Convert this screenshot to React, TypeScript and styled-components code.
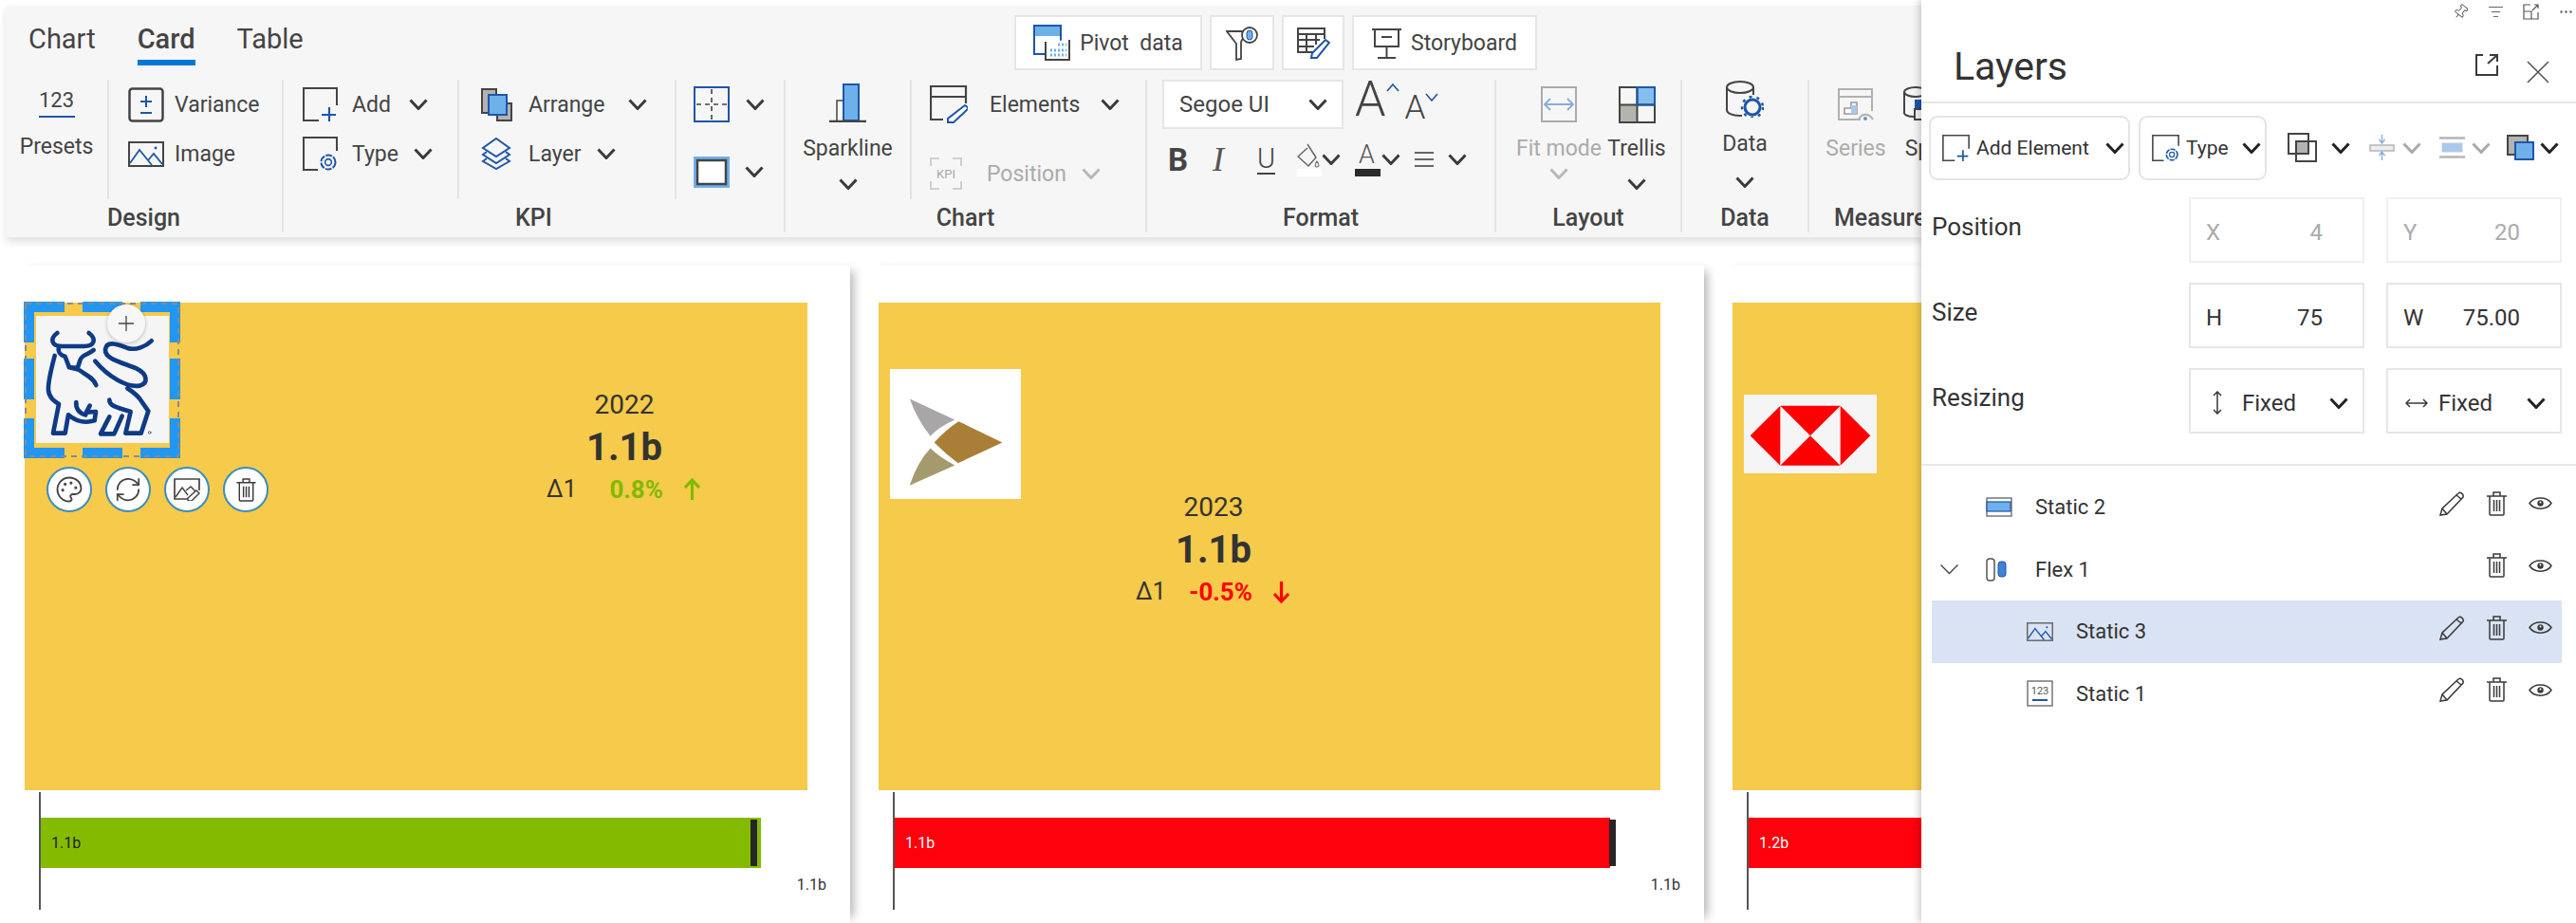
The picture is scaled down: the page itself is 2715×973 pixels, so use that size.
import * as React from "react";
import styled, { createGlobalStyle } from "styled-components";
import { Palette, RefreshCw, Pin, ListFilter, Ellipsis, Plus } from "lucide-react";

const DARK = "#444444";
const BLUE = "#1e56a8";
const SKY = "#6eb0ea";
const STONE = "#b5b3ae";
const MUTED = "#ababab";

const GlobalStyle = createGlobalStyle`
  html, body {
    margin: 0;
    padding: 0;
    background: #ffffff;
  }
  * {
    box-sizing: border-box;
  }
  body {
    font-family: Roboto, "Open Sans", "Liberation Sans", sans-serif;
    color: #3a3a3a;
  }
`;

const Page = styled.div`
  display: flex;
  width: 2715px;
  height: 973px;
  overflow: hidden;
`;

const Main = styled.div`
  width: 2025px;
  flex: none;
  overflow: hidden;
  background: #ffffff;
  display: flex;
  flex-direction: column;
`;

/* ---------- ribbon ---------- */

const Ribbon = styled.div`
  width: 2040px;
  height: 244px;
  margin: 6px 0 0 6px;
  flex: none;
  background: #f6f6f6;
  box-shadow: 0 5px 8px rgba(0, 0, 0, 0.12);
  position: relative;
  z-index: 2;
`;

const TabRow = styled.div`
  display: flex;
  height: 78px;
`;

const Tabs = styled.div`
  width: 1063px;
  padding-left: 24px;
  display: flex;
  gap: 44px;
`;

const Tab = styled.div<{ $active?: boolean }>`
  height: 63px;
  line-height: 70px;
  font-size: 29px;
  font-weight: ${(p) => (p.$active ? 500 : 400)};
  color: #444;
  border-bottom: 6px solid ${(p) => (p.$active ? "#0078d4" : "transparent")};
`;

const TopActions = styled.div`
  display: flex;
  gap: 8px;
  padding-top: 10px;
`;

const TopAction = styled.div<{ $w: number }>`
  width: ${(p) => p.$w}px;
  height: 58px;
  background: #fff;
  border: 2px solid #e6e6e6;
  display: flex;
  align-items: center;
  justify-content: center;
  gap: 10px;
  font-size: 23px;
  color: #444;
`;

const Groups = styled.div`
  display: flex;
  height: 166px;
`;

const Group = styled.div<{ $w: number; $end?: boolean }>`
  width: ${(p) => p.$w}px;
  flex: none;
  height: 161px;
  display: flex;
  flex-direction: column;
  border-right: ${(p) => (p.$end ? "none" : "2px solid #e4e4e4")};
`;

const GroupBody = styled.div`
  display: flex;
  height: 126px;
  flex: none;
`;

const GroupTitle = styled.div<{ $left?: number }>`
  height: 35px;
  line-height: 40px;
  text-align: ${(p) => (p.$left ? "left" : "center")};
  padding-left: ${(p) => p.$left ?? 0}px;
  font-size: 25px;
  font-weight: 500;
  color: #444;
  white-space: nowrap;
`;

const Cell = styled.div<{ $w: number; $line?: boolean; $pl?: number }>`
  width: ${(p) => p.$w}px;
  flex: none;
  padding-left: ${(p) => p.$pl ?? 0}px;
  border-right: ${(p) => (p.$line ? "2px solid #e4e4e4" : "none")};
`;

const ToolRow = styled.div<{ $h?: number; $mt?: number }>`
  display: flex;
  align-items: center;
  height: ${(p) => p.$h ?? 52}px;
  margin-top: ${(p) => p.$mt ?? 0}px;
`;

const ToolLabel = styled.span<{ $w: number; $ml: number; $muted?: boolean }>`
  width: ${(p) => p.$w}px;
  margin-left: ${(p) => p.$ml}px;
  font-size: 23px;
  color: ${(p) => (p.$muted ? MUTED : "#444")};
  white-space: nowrap;
`;

const PresetBlock = styled.div`
  display: flex;
  flex-direction: column;
  align-items: center;
  font-size: 23px;
  color: #444;
`;

const PresetNumber = styled.div`
  margin-top: 11px;
  width: 38px;
  height: 29px;
  line-height: 22px;
  text-align: center;
  font-size: 22px;
  border-bottom: 2px solid ${BLUE};
`;

const PresetName = styled.div`
  margin-top: 16px;
  line-height: 30px;
`;

const VerticalTool = styled.div<{ $w: number; $ml?: number; $muted?: boolean }>`
  width: ${(p) => p.$w}px;
  margin-left: ${(p) => p.$ml ?? 0}px;
  flex: none;
  display: flex;
  flex-direction: column;
  align-items: center;
  font-size: 23px;
  color: ${(p) => (p.$muted ? MUTED : "#444")};
`;

const IconSlot = styled.div<{ $h: number; $top: number }>`
  height: ${(p) => p.$h}px;
  padding-top: ${(p) => p.$top}px;
`;

const VerticalLabel = styled.div<{ $mb: number }>`
  line-height: 36px;
  margin-bottom: ${(p) => p.$mb}px;
  white-space: nowrap;
`;

const FontSelect = styled.div`
  width: 191px;
  height: 52px;
  margin-left: 16px;
  background: #fff;
  border: 2px solid #e6e6e6;
  display: flex;
  align-items: center;
  justify-content: space-between;
  padding: 0 15px 0 16px;
  font-size: 24px;
  color: #444;
`;

const GrowLetter = styled.span<{ $size: number; $ml: number }>`
  margin: 0 0 5px ${(p) => p.$ml}px;
  font-size: ${(p) => p.$size}px;
  font-weight: 300;
  line-height: 1;
  color: #444;
  align-self: flex-end;
`;

const FormatRow = styled.div`
  display: flex;
  align-items: center;
  height: 52px;
  margin-top: 6px;
  padding-left: 22px;
`;

const FormatSlot = styled.div<{ $w: number }>`
  width: ${(p) => p.$w}px;
  flex: none;
  display: flex;
  flex-direction: column;
  align-items: flex-start;
`;

const BoldMark = styled.span`
  font-size: 33px;
  font-weight: 700;
  color: #444;
  line-height: 1;
`;

const ItalicMark = styled.span`
  font-family: "Liberation Serif", serif;
  font-style: italic;
  font-size: 36px;
  color: #555;
  line-height: 1;
`;

const UnderMark = styled.span`
  font-size: 29px;
  font-weight: 300;
  line-height: 30px;
  color: #444;
  border-bottom: 2px solid #444;
`;

const ColorLetter = styled.span`
  font-size: 27px;
  font-weight: 300;
  line-height: 24px;
  color: #555;
  margin-left: 4px;
`;

const ColorBar = styled.span`
  display: block;
  width: 27px;
  height: 8px;
  margin-top: 3px;
  background: #2b2b2b;
`;

/* ---------- cards ---------- */

const CardsRow = styled.div`
  display: flex;
  gap: 18px;
  padding: 30px 0 0 14px;
  flex: 1;
`;

const Card = styled.div`
  width: 882px;
  flex: none;
  padding-top: 39px;
  box-shadow: 9px 0 10px -6px rgba(0, 0, 0, 0.32);
`;

const YellowPanel = styled.div<{ $w: number }>`
  position: relative;
  width: ${(p) => p.$w}px;
  height: 514px;
  margin-left: 12px;
  background: #f6ca4a;
  display: flex;
  align-items: flex-start;
`;

const LogoBox = styled.div<{ $w: number; $h: number; $ml: number; $mt: number; $bg: string }>`
  width: ${(p) => p.$w}px;
  height: ${(p) => p.$h}px;
  margin: ${(p) => p.$mt}px 0 0 ${(p) => p.$ml}px;
  background: ${(p) => p.$bg};
  flex: none;
  svg {
    display: block;
    width: 100%;
    height: 100%;
  }
`;

const Kpi = styled.div<{ $ml: number; $mt: number }>`
  width: 164px;
  margin: ${(p) => p.$mt}px 0 0 ${(p) => p.$ml}px;
  flex: none;
  text-align: center;
  color: #333;
`;

const KpiYear = styled.div`
  font-size: 28px;
  line-height: 40px;
`;

const KpiValue = styled.div`
  font-size: 40px;
  line-height: 50px;
  font-weight: 700;
`;

const KpiDelta = styled.div`
  display: flex;
  align-items: center;
  font-size: 25px;
  line-height: 38px;
`;

const DeltaName = styled.span`
  width: 34px;
  text-align: left;
`;

const DeltaValue = styled.span<{ $color: string }>`
  width: 89px;
  margin-right: 21px;
  text-align: right;
  font-size: 26px;
  font-weight: 700;
  color: ${(p) => p.$color};
`;

const SelectionFrame = styled.svg`
  position: absolute;
  left: -1px;
  top: -1px;
`;

const AddCircle = styled.div`
  position: absolute;
  left: 87px;
  top: 2px;
  width: 40px;
  height: 40px;
  border-radius: 50%;
  background: #f7f7f7;
  box-shadow: 0 1px 4px rgba(0, 0, 0, 0.25);
  display: flex;
  align-items: center;
  justify-content: center;
  color: #444;
`;

const FloatingTools = styled.div`
  position: absolute;
  left: 23px;
  top: 173px;
  display: flex;
  gap: 14px;
`;

const RoundTool = styled.div`
  width: 48px;
  height: 48px;
  border-radius: 50%;
  background: #fff;
  border: 2px solid #3d8dbf;
  display: flex;
  align-items: center;
  justify-content: center;
  color: #444;
`;

const ChartArea = styled.div`
  width: 830px;
  height: 124px;
  margin: 2px 0 0 27px;
  border-left: 2px solid #555;
  padding-top: 27px;
`;

const Bar = styled.div<{ $w: number; $color: string; $text: string }>`
  position: relative;
  width: ${(p) => p.$w}px;
  height: 53px;
  background: ${(p) => p.$color};
  color: ${(p) => p.$text};
  font-size: 16px;
  line-height: 53px;
  padding-left: 11px;
`;

const BarMarker = styled.span<{ $right: number }>`
  position: absolute;
  top: 2px;
  bottom: 2px;
  right: ${(p) => p.$right}px;
  width: 7px;
  background: #262626;
`;

const AxisLabel = styled.div`
  margin-top: 6px;
  text-align: right;
  font-size: 16px;
  line-height: 24px;
  color: #333;
`;

/* ---------- layers panel ---------- */

const Panel = styled.aside`
  width: 690px;
  flex: none;
  position: relative;
  z-index: 3;
  background: #fff;
  box-shadow: -3px 0 7px rgba(0, 0, 0, 0.18);
`;

const WindowIcons = styled.div`
  display: flex;
  height: 28px;
  padding: 4px 0 0 560px;
  color: #555;
  gap: 20px;
`;

const PanelHeader = styled.div`
  height: 81px;
  display: flex;
  align-items: center;
  padding: 4px 0 0 34px;
  border-bottom: 2px solid #e6e6e6;
`;

const PanelTitle = styled.h1`
  margin: 0 auto 0 0;
  font-size: 41px;
  font-weight: 400;
  color: #333;
`;

const HeaderIcons = styled.div`
  align-self: flex-start;
  display: flex;
  align-items: flex-start;
  gap: 30px;
  padding: 25px 28px 0 0;
`;

const CloseMark = styled.svg`
  display: block;
  margin-top: 7px;
`;

const PanelToolbar = styled.div`
  display: flex;
  align-items: center;
  height: 81px;
  padding: 12px 0 0 8px;
`;

const PanelButton = styled.div<{ $w: number; $mr: number }>`
  width: ${(p) => p.$w}px;
  height: 68px;
  margin-right: ${(p) => p.$mr}px;
  border: 2px solid #e4e4e4;
  border-radius: 9px;
  display: flex;
  align-items: center;
  padding-left: 12px;
  font-size: 21px;
  color: #333;
`;

const ButtonText = styled.span<{ $w: number }>`
  width: ${(p) => p.$w}px;
  margin-left: 7px;
  white-space: nowrap;
`;

const ToolSlot = styled.div<{ $w: number; $gap: number }>`
  width: ${(p) => p.$w}px;
  flex: none;
  display: flex;
  align-items: center;
  gap: ${(p) => p.$gap}px;
`;

const Properties = styled.div`
  display: flex;
  flex-direction: column;
  gap: 21px;
  padding: 18px 0 32px 11px;
  border-bottom: 2px solid #e6e6e6;
`;

const PropRow = styled.div`
  display: flex;
  gap: 23px;
  height: 69px;
`;

const PropLabel = styled.div`
  width: 248px;
  line-height: 63px;
  font-size: 26px;
  color: #333;
`;

const Field = styled.div<{ $muted?: boolean }>`
  width: 185px;
  border: 2px solid ${(p) => (p.$muted ? "#f0f0f0" : "#e6e6e6")};
  display: flex;
  align-items: center;
  justify-content: space-between;
  padding: 4px 42px 0 16px;
  font-size: 24px;
  color: ${(p) => (p.$muted ? MUTED : "#333")};
`;

const SelectField = styled(Field)`
  justify-content: flex-start;
  padding: 4px 0 0 0;
`;

const FixedText = styled.span<{ $w: number; $ml: number }>`
  width: ${(p) => p.$w}px;
  margin-left: ${(p) => p.$ml}px;
`;

const LayerList = styled.div`
  padding: 11px 15px 0 11px;
`;

const LayerRow = styled.div<{ $selected?: boolean }>`
  display: flex;
  align-items: center;
  height: 65.5px;
  padding-right: 10px;
  background: ${(p) => (p.$selected ? "#dae3f3" : "transparent")};
  font-size: 22px;
  color: #333;
`;

const Caret = styled.div`
  width: 57px;
  flex: none;
  padding-left: 8px;
`;

const LayerIconBox = styled.div<{ $indent: boolean }>`
  width: 52px;
  flex: none;
  margin-left: ${(p) => (p.$indent ? 43 : 0)}px;
`;

const LayerName = styled.span`
  margin-right: auto;
`;

const LayerActions = styled.div`
  display: flex;
  align-items: center;
  gap: 23px;
  margin-top: -8px;
`;

/* ---------- icons ---------- */

const Chevron = ({ w = 20, h = 12, color = "#3a3a3a", sw = 3 }: { w?: number; h?: number; color?: string; sw?: number }) => (
  <svg width={w} height={h} viewBox={`0 0 ${w} ${h}`} style={{ display: "block", flex: "none" }}>
    <path d={`M1.5 1.5 L${w / 2} ${h - 1.5} L${w - 1.5} 1.5`} fill="none" stroke={color} strokeWidth={sw} />
  </svg>
);

const Ico = styled.svg`
  display: block;
  flex: none;
`;

const VarianceIcon = () => (
  <Ico width="38" height="37" viewBox="0 0 38 37" fill="none">
    <rect x="1.5" y="1.5" width="35" height="34" rx="3" stroke={DARK} strokeWidth="2.5" />
    <path d="M13 15h12M19 9v12M13 27h12" stroke={BLUE} strokeWidth="2" />
  </Ico>
);

const ImageIcon = ({ w = 38, h = 27, color = DARK }: { w?: number; h?: number; color?: string }) => (
  <Ico width={w} height={h} viewBox="0 0 38 27" fill="none">
    <rect x="1" y="1" width="36" height="25" stroke={color} strokeWidth="2" />
    <path d="M2 23 L12 9 L25 25 M21 20 L27 13 L36 24" stroke={BLUE} strokeWidth="1.8" />
    <circle cx="29" cy="7" r="1.4" fill={BLUE} />
  </Ico>
);

const AddIcon = ({ w = 37, h = 36 }: { w?: number; h?: number }) => (
  <Ico width={w} height={h} viewBox="0 0 37 36" fill="none">
    <path d="M17 35H1V1H36V19" stroke={DARK} strokeWidth="2" />
    <path d="M20 29H35M28 21V36" stroke={BLUE} strokeWidth="2.2" />
  </Ico>
);

const Gear = ({ x, y, r }: { x: number; y: number; r: number }) => (
  <g stroke={BLUE} fill="none">
    <circle cx={x} cy={y} r={r} strokeWidth="2" strokeDasharray={`${r * 0.9} ${r * 0.18}`} />
    <circle cx={x} cy={y} r={r * 0.45} strokeWidth="1.6" />
  </g>
);

const TypeIcon = ({ w = 37, h = 36 }: { w?: number; h?: number }) => (
  <Ico width={w} height={h} viewBox="0 0 37 36" fill="none">
    <path d="M16 35H1V1H36V15" stroke={DARK} strokeWidth="2" />
    <Gear x={27} y={27} r={7.5} />
  </Ico>
);

const ArrangeIcon = () => (
  <Ico width="34" height="35" viewBox="0 0 34 35">
    <rect x="1" y="1" width="15" height="25" fill={STONE} stroke={DARK} strokeWidth="2" />
    <rect x="17" y="16" width="15" height="18" fill={STONE} stroke={DARK} strokeWidth="2" />
    <rect x="8" y="7" width="19" height="21" fill={SKY} stroke={BLUE} strokeWidth="2" />
  </Ico>
);

const LayerIcon = () => (
  <Ico width="32" height="34" viewBox="0 0 32 34" fill="none" stroke={BLUE} strokeWidth="2">
    <path d="M16 1 L30 11 L16 20 L2 11Z" />
    <path d="M6 15 L2 18 L16 27 L30 18 L26 15" />
    <path d="M6 22 L2 25 L16 33 L30 25 L26 22" />
  </Ico>
);

const GuideIcon = () => (
  <Ico width="38" height="38" viewBox="0 0 38 38" fill="none">
    <rect x="1" y="1" width="36" height="36" stroke={BLUE} strokeWidth="2" />
    <path d="M19 3V35M3 19H35" stroke={DARK} strokeWidth="1.6" strokeDasharray="5 4" />
  </Ico>
);

const BoxIcon = () => (
  <Ico width="38" height="33" viewBox="0 0 38 33">
    <rect width="38" height="33" fill={SKY} />
    <rect x="4" y="4" width="30" height="25" fill="#fff" stroke={DARK} strokeWidth="2.5" />
  </Ico>
);

const SparklineIcon = () => (
  <Ico width="39" height="41" viewBox="0 0 39 41">
    <rect x="8" y="18" width="10" height="22" fill="none" stroke={DARK} strokeWidth="1.5" />
    <rect x="15" y="1" width="16" height="38" fill={SKY} stroke={BLUE} strokeWidth="2" />
    <path d="M0 40H39" stroke={DARK} strokeWidth="2.5" />
  </Ico>
);

const ElementsIcon = () => (
  <Ico width="40" height="40" viewBox="0 0 40 40" fill="none">
    <path d="M14 36H1V1H38V19M1 12H38" stroke={DARK} strokeWidth="2.2" />
    <path d="M37 21 L41 24 L25 39 L19 39 L19 35Z" fill="#fff" stroke={BLUE} strokeWidth="2" />
  </Ico>
);

const KpiFrameIcon = () => (
  <Ico width="34" height="34" viewBox="0 0 34 34" fill="none">
    <path d="M1 9V1H10M24 1H33V9M33 25V33H24M10 33H1V25" stroke="#cfcfcf" strokeWidth="2" />
    <text x="17" y="22" textAnchor="middle" fontSize="13" fill="#a8a8a8" fontFamily="Roboto, sans-serif">KPI</text>
  </Ico>
);

const PivotIcon = () => (
  <Ico width="39" height="38" viewBox="0 0 39 38" fill="none">
    <rect x="1" y="1" width="28" height="30" fill="#fff" stroke={BLUE} strokeWidth="2" />
    <rect x="2" y="2" width="26" height="10" fill={SKY} />
    <path d="M13 18V37H38V16" fill="#fff" stroke={DARK} strokeWidth="2" />
    <path d="M18 32H35M18 27H35M26 21H35" stroke={SKY} strokeWidth="3" strokeDasharray="2 2" />
  </Ico>
);

const FunnelIcon = () => (
  <Ico width="34" height="37" viewBox="0 0 34 37" fill="none">
    <path d="M1 6H22L16 17V35L11 36V19Z" stroke={DARK} strokeWidth="1.8" />
    <circle cx="25" cy="10" r="8" fill="#fff" stroke={DARK} strokeWidth="1.8" />
    <rect x="22" y="5" width="6" height="10" rx="3" fill={SKY} stroke={BLUE} strokeWidth="1" />
  </Ico>
);

const TableEditIcon = () => (
  <Ico width="35" height="33" viewBox="0 0 35 33" fill="none">
    <path d="M19 26H1V1H29V12M1 7H29M1 13H24M1 20H18M10 7V26M20 7V18" stroke={DARK} strokeWidth="2" />
    <path d="M30 13 L34 16 L21 32 L15 32 L16 27Z" fill="#fff" stroke={BLUE} strokeWidth="2" />
  </Ico>
);

const StoryIcon = () => (
  <Ico width="31" height="33" viewBox="0 0 31 33" fill="none" stroke={DARK} strokeWidth="2">
    <path d="M0 2H31M3 2V20H28V2M15.5 20V31M6 32H25M10 10H21" />
  </Ico>
);

const FitIcon = () => (
  <Ico width="38" height="38" viewBox="0 0 38 38" fill="none">
    <rect x="1" y="1" width="36" height="36" stroke="#ababab" strokeWidth="2" />
    <path d="M4 19H34M10 13 L4 19 L10 25M28 13 L34 19 L28 25" stroke="#86acd9" strokeWidth="1.8" />
  </Ico>
);

const TrellisIcon = () => (
  <Ico width="39" height="39" viewBox="0 0 39 39">
    <rect x="1" y="20" width="18" height="18" fill={STONE} />
    <rect x="20" y="1" width="18" height="18" fill="#85bdee" />
    <path d="M1 1H38V38H1ZM19.5 1V38M1 19.5H38" fill="none" stroke={DARK} strokeWidth="2" />
    <path d="M19.5 1H38V19.5H19.5Z" fill="none" stroke={BLUE} strokeWidth="2" />
  </Ico>
);

const DataIcon = () => (
  <Ico width="40" height="39" viewBox="0 0 40 39" fill="none">
    <ellipse cx="15" cy="7" rx="14" ry="6" stroke={DARK} strokeWidth="2" />
    <path d="M1 7V31C1 34 6 37 15 37H17M29 7V15" stroke={DARK} strokeWidth="2" />
    <circle cx="28" cy="28" r="8" stroke={BLUE} strokeWidth="3" />
    <circle cx="28" cy="28" r="11" stroke={BLUE} strokeWidth="2.5" strokeDasharray="3 5" />
  </Ico>
);

const SeriesIcon = () => (
  <Ico width="38" height="36" viewBox="0 0 38 36" fill="none">
    <path d="M24 33H1V1H36V24M1 9H36" stroke="#b0b0b0" strokeWidth="2" />
    <path d="M7 27V21H14V15H20V27Z" fill="#fff" stroke="#9a9a9a" strokeWidth="1.6" />
    <rect x="14" y="18" width="6" height="9" fill="#a9c8ec" />
    <path d="M22 33C25 26 33 26 37 33" stroke="#b0b0b0" strokeWidth="2" />
    <circle cx="29" cy="32" r="2" fill="#6a92c5" />
  </Ico>
);

const SplitIcon = () => (
  <Ico width="30" height="36" viewBox="0 0 30 36" fill="none">
    <ellipse cx="13" cy="6" rx="12" ry="5" stroke={DARK} strokeWidth="2" />
    <path d="M1 6V28C1 30 5 32 11 32M25 6V12" stroke={DARK} strokeWidth="2" />
    <rect x="12" y="14" width="18" height="10" fill={BLUE} />
    <rect x="12" y="24" width="18" height="11" stroke={DARK} strokeWidth="2" />
  </Ico>
);

const FillIcon = () => (
  <Ico width="26" height="36" viewBox="0 0 26 36" fill="none">
    <path d="M11 2 L20 16 L12 25 L1 15 L11 6" stroke="#666" strokeWidth="1.5" />
    <path d="M21 20 C18 24 19 26 21 26 C23 26 24 24 21 20Z" stroke="#666" strokeWidth="1.2" />
    <rect y="28" width="26" height="8" fill="#fff" />
  </Ico>
);

const LinesIcon = () => (
  <Ico width="23" height="16" viewBox="0 0 23 16" fill="none">
    <path d="M1 1H21M1 8H21M1 15H21" stroke="#666" strokeWidth="2" />
  </Ico>
);

const GrowCaret = ({ down }: { down?: boolean }) => (
  <svg width="14" height="9" viewBox="0 0 14 9" fill="none" style={{ alignSelf: "flex-start", marginTop: down ? 14 : 4 }}>
    <path d={down ? "M1 1 L7 8 L13 1" : "M1 8 L7 1 L13 8"} stroke={BLUE} strokeWidth="1.6" />
  </svg>
);

const OpenIcon = () => (
  <Ico width="24" height="23" viewBox="0 0 24 23" fill="none" stroke="#3a3a3a" strokeWidth="2">
    <path d="M8 1H1V22H23V12M13 10 L23 1M15 1H23V8" />
  </Ico>
);

const ExpandIcon = () => (
  <Ico width="17" height="17" viewBox="0 0 17 17" fill="none" stroke="#555" strokeWidth="1.2">
    <path d="M8 1H1V16H16V9M1 8H9V16M10 7 L16 1M12 1H16V5" />
  </Ico>
);

const OverlapIcon = () => (
  <Ico width="31" height="31" viewBox="0 0 31 31" fill="none">
    <rect x="9" y="9" width="12" height="13" fill={STONE} />
    <rect x="1" y="1" width="21" height="21" stroke={DARK} strokeWidth="2" />
    <rect x="9" y="9" width="21" height="21" stroke={DARK} strokeWidth="2" />
  </Ico>
);

const AlignIcon = () => (
  <Ico width="27" height="27" viewBox="0 0 27 27" fill="none">
    <rect x="1" y="11" width="25" height="6" fill="#eee" stroke="#b5b5b5" strokeWidth="1.5" />
    <path d="M13.5 0V8M10.5 5 L13.5 9 L16.5 5M13.5 27V19M10.5 22 L13.5 18 L16.5 22" stroke="#86acd9" strokeWidth="1.3" />
  </Ico>
);

const DistributeIcon = () => (
  <Ico width="27" height="23" viewBox="0 0 27 23" fill="none">
    <path d="M0 1.5H27M0 21.5H27" stroke="#b5b5b5" strokeWidth="2.4" />
    <rect x="3" y="7" width="21" height="9" fill="#a9c8ec" stroke="#b9cde6" />
  </Ico>
);

const FrontIcon = () => (
  <Ico width="29" height="27" viewBox="0 0 29 27">
    <rect x="1" y="1" width="21" height="20" fill={STONE} stroke={DARK} strokeWidth="2" />
    <rect x="9" y="8" width="19" height="18" fill={SKY} stroke={BLUE} strokeWidth="2" />
  </Ico>
);

const VerticalArrow = () => (
  <Ico width="10" height="25" viewBox="0 0 10 25" fill="none" stroke="#3a3a3a" strokeWidth="1.5">
    <path d="M5 1V24M1 5 L5 1 L9 5M1 20 L5 24 L9 20" />
  </Ico>
);

const HorizontalArrow = () => (
  <Ico width="24" height="10" viewBox="0 0 24 10" fill="none" stroke="#3a3a3a" strokeWidth="1.5">
    <path d="M1 5H23M5 1 L1 5 L5 9M19 1 L23 5 L19 9" />
  </Ico>
);

const PencilIcon = () => (
  <Ico width="27" height="26" viewBox="0 0 27 26" fill="none" stroke="#3a3a3a" strokeWidth="1.5">
    <path d="M20 2 C22 0 26 3 25 6 L8 24 L1 25 L3 18Z M3 18 L8 24 M18 4 L23 8" />
  </Ico>
);

const TrashIcon = ({ w = 21, h = 26 }: { w?: number; h?: number }) => (
  <Ico width={w} height={h} viewBox="0 0 21 26" fill="none" stroke="#3a3a3a" strokeWidth="1.5">
    <path d="M0 5H21M7 5V1H14V5M3 5V24C3 25 4 25 4 25H17C17 25 18 25 18 24V5M7.5 9V21M10.5 9V21M13.5 9V21" />
  </Ico>
);

const EyeIcon = () => (
  <Ico width="25" height="13" viewBox="0 0 25 13" fill="none" stroke="#3a3a3a" strokeWidth="1.5">
    <path d="M1 6.5 C6 -1 19 -1 24 6.5 C19 14 6 14 1 6.5Z" />
    <circle cx="12.5" cy="6.5" r="3.2" fill="#3a3a3a" stroke="none" />
    <circle cx="12.5" cy="5.5" r="1" fill="#fff" stroke="none" />
  </Ico>
);

const ImageEditIcon = () => (
  <Ico width="28" height="24" viewBox="0 0 28 24" fill="none">
    <path d="M15 22H1V1H27V13" stroke={DARK} strokeWidth="1.7" />
    <path d="M2 20 L9 10 L15 18M13 13 L18 9 L23 14" stroke={DARK} strokeWidth="1.5" />
    <path d="M24 13 L27 16 L19 24 L15 24 L15 21Z" fill="#fff" stroke={DARK} strokeWidth="1.5" />
  </Ico>
);

const StaticCardIcon = () => (
  <Ico width="28" height="21" viewBox="0 0 28 21">
    <rect x="1" y="1" width="26" height="19" fill="#fff" stroke="#777" strokeWidth="1.5" />
    <rect x="1" y="5" width="25" height="10" fill={SKY} stroke={BLUE} strokeWidth="1.2" />
  </Ico>
);

const FlexIcon = () => (
  <Ico width="22" height="25" viewBox="0 0 22 25" fill="none">
    <rect x="1" y="1" width="8" height="23" rx="3" stroke="#555" strokeWidth="1.5" />
    <rect x="13" y="4" width="8" height="16" rx="3" fill="#3f83d6" stroke={BLUE} />
  </Ico>
);

const NumberIcon = () => (
  <Ico width="28" height="28" viewBox="0 0 28 28" fill="none">
    <rect x="1" y="1" width="26" height="26" stroke="#777" strokeWidth="1.5" />
    <text x="14" y="15" textAnchor="middle" fontSize="11" fill="#555" fontFamily="Roboto, sans-serif">123</text>
    <path d="M6 21H22" stroke={BLUE} strokeWidth="2" />
  </Ico>
);

const ArrowMark = ({ color, down }: { color: string; down?: boolean }) => (
  <svg width="19" height="24" viewBox="0 0 19 24" fill="none" stroke={color} strokeWidth="3.2" style={{ display: "block" }}>
    <path d={down ? "M9.5 1V22M2 14 L9.5 22 L17 14" : "M9.5 23V2M2 10 L9.5 2 L17 10"} />
  </svg>
);

const BullLogo = () => (
  <svg viewBox="113 100 420 400" fill="none" stroke="#0e3a86" strokeWidth="14" strokeLinejoin="round" strokeLinecap="round">
    <path d="M180 153 C155 172 162 195 195 195 L265 195 C298 195 305 172 280 153" />
    <path d="M185 198 C180 215 190 222 205 228 L218 262 L243 268 L252 240 C256 222 278 222 295 207" />
    <path d="M212 258 L248 258" strokeWidth="5" />
    <path d="M172 225 C160 270 150 310 152 335 C155 358 170 368 185 378 L167 470 L205 470 L215 412 C235 430 265 440 298 430 L302 402 L272 404 L283 383" />
    <path d="M252 272 C270 285 295 295 303 318" />
    <path d="M300 242 C340 290 400 326 440 320 C470 312 465 282 430 265 C380 245 330 235 332 205 C336 175 375 190 400 200 C430 210 460 195 478 178" />
    <path d="M400 202 C425 205 445 200 470 182 C460 200 430 214 400 202Z" fill="#0e3a86" strokeWidth="3" />
    <path d="M345 365 C345 385 370 388 412 402 L396 470 L445 470 L468 400 L440 360 C428 345 412 335 402 328" />
    <path d="M345 418 L317 472 L360 472 L385 416" />
    <path d="M240 372 C238 390 248 408 270 412" />
    <circle cx="472" cy="468" r="4" strokeWidth="2" />
  </svg>
);

const ArrowLogo = () => (
  <svg viewBox="1007 28 350 410">
    <path d="M1038 122 Q1060 185 1103 240 Q1130 210 1180 188Z" fill="#a8a6a6" />
    <path d="M1115 260 Q1150 220 1192 193 L1330 260 L1190 325 Q1150 295 1115 260Z" fill="#a97f38" />
    <path d="M1103 278 Q1130 305 1180 332 L1038 395 Q1060 325 1103 278Z" fill="#a49a6e" />
  </svg>
);

const HexLogo = () => (
  <svg viewBox="110 108 420 249" fill="#ff0000">
    <path d="M130 238 L225 143 V332Z" />
    <path d="M225 143 H415 L320 238Z" />
    <path d="M225 332 H415 L320 238Z" />
    <path d="M415 143 L510 238 L415 332Z" />
  </svg>
);

const Selection = () => (
  <>
    <SelectionFrame width="166" height="166" viewBox="0 0 166 166">
      <g fill="#2196f3">
        <path d="M0 0H43V11H11V43H0Z" />
        <path d="M62 0H104V11H62Z" />
        <path d="M123 0H165V43H154V11H123Z" />
        <path d="M0 60H11V103H0Z" />
        <path d="M154 60H165V103H154Z" />
        <path d="M0 123H11V154H43V165H0Z" />
        <path d="M62 154H104V165H62Z" />
        <path d="M154 123H165V165H123V154H154Z" />
      </g>
      <rect x="2" y="2" width="161" height="161" fill="none" stroke="#8a8a8a" strokeWidth="2" strokeDasharray="6 5" />
    </SelectionFrame>
    <AddCircle>
      <Plus size={26} strokeWidth={1.2} />
    </AddCircle>
    <FloatingTools>
      <RoundTool><Palette size={30} strokeWidth={1.5} /></RoundTool>
      <RoundTool><RefreshCw size={30} strokeWidth={1.4} /></RoundTool>
      <RoundTool><ImageEditIcon /></RoundTool>
      <RoundTool><TrashIcon w={21} h={25} /></RoundTool>
    </FloatingTools>
  </>
);

/* ---------- data ---------- */

const layers = [
  { name: "Static 2", icon: <StaticCardIcon />, indent: false, edit: true },
  { name: "Flex 1", icon: <FlexIcon />, indent: false, edit: false, open: true },
  { name: "Static 3", icon: <ImageIcon w={28} h={26} color="#666" />, indent: true, edit: true, selected: true },
  { name: "Static 1", icon: <NumberIcon />, indent: true, edit: true },
];

const RibbonBar = () => (
  <Ribbon>
    <TabRow>
      <Tabs>
        <Tab>Chart</Tab>
        <Tab $active>Card</Tab>
        <Tab>Table</Tab>
      </Tabs>
      <TopActions>
        <TopAction $w={198}><PivotIcon />Pivot&nbsp; data</TopAction>
        <TopAction $w={68}><FunnelIcon /></TopAction>
        <TopAction $w={66}><TableEditIcon /></TopAction>
        <TopAction $w={195}><StoryIcon />Storyboard</TopAction>
      </TopActions>
    </TabRow>
    <Groups>
      <Group $w={293}>
        <GroupBody>
          <Cell $w={109} $line>
            <PresetBlock>
              <PresetNumber>123</PresetNumber>
              <PresetName>Presets</PresetName>
            </PresetBlock>
          </Cell>
          <Cell $w={182} $pl={20}>
            <ToolRow><VarianceIcon /><ToolLabel $w={100} $ml={11}>Variance</ToolLabel></ToolRow>
            <ToolRow><ImageIcon /><ToolLabel $w={100} $ml={11}>Image</ToolLabel></ToolRow>
          </Cell>
        </GroupBody>
        <GroupTitle>Design</GroupTitle>
      </Group>
      <Group $w={529}>
        <GroupBody>
          <Cell $w={185} $line $pl={20}>
            <ToolRow><AddIcon /><ToolLabel $w={60} $ml={15}>Add</ToolLabel><Chevron /></ToolRow>
            <ToolRow><TypeIcon /><ToolLabel $w={65} $ml={15}>Type</ToolLabel><Chevron /></ToolRow>
          </Cell>
          <Cell $w={229} $line $pl={23}>
            <ToolRow><ArrangeIcon /><ToolLabel $w={105} $ml={16}>Arrange</ToolLabel><Chevron /></ToolRow>
            <ToolRow><LayerIcon /><ToolLabel $w={72} $ml={18}>Layer</ToolLabel><Chevron /></ToolRow>
          </Cell>
          <Cell $w={113} $pl={18}>
            <ToolRow><GuideIcon /><ToolLabel $w={0} $ml={17} /><Chevron /></ToolRow>
            <ToolRow $h={38} $mt={26}><BoxIcon /><ToolLabel $w={0} $ml={16} /><Chevron /></ToolRow>
          </Cell>
        </GroupBody>
        <GroupTitle>KPI</GroupTitle>
      </Group>
      <Group $w={381}>
        <GroupBody>
          <Cell $w={133} $line>
            <VerticalTool $w={131}>
              <IconSlot $h={55} $top={4}><SparklineIcon /></IconSlot>
              <VerticalLabel $mb={13}>Sparkline</VerticalLabel>
              <Chevron />
            </VerticalTool>
          </Cell>
          <Cell $w={246} $pl={19}>
            <ToolRow><ElementsIcon /><ToolLabel $w={117} $ml={23}>Elements</ToolLabel><Chevron /></ToolRow>
            <ToolRow $h={52} $mt={21}>
              <KpiFrameIcon />
              <ToolLabel $w={100} $ml={26} $muted>Position</ToolLabel>
              <Chevron color="#b8b8b8" />
            </ToolRow>
          </Cell>
        </GroupBody>
        <GroupTitle>Chart</GroupTitle>
      </Group>
      <Group $w={368}>
        <GroupBody>
          <Cell $w={366}>
            <ToolRow>
              <FontSelect>Segoe UI<Chevron /></FontSelect>
              <GrowLetter $size={52} $ml={12}>A</GrowLetter>
              <GrowCaret />
              <GrowLetter $size={35} $ml={6}>A</GrowLetter>
              <GrowCaret down />
            </ToolRow>
            <FormatRow>
              <FormatSlot $w={47}><BoldMark>B</BoldMark></FormatSlot>
              <FormatSlot $w={47}><ItalicMark>I</ItalicMark></FormatSlot>
              <FormatSlot $w={42}><UnderMark>U</UnderMark></FormatSlot>
              <FormatSlot $w={26}><FillIcon /></FormatSlot>
              <FormatSlot $w={35}><Chevron /></FormatSlot>
              <FormatSlot $w={28}><ColorLetter>A</ColorLetter><ColorBar /></FormatSlot>
              <FormatSlot $w={34}><Chevron /></FormatSlot>
              <FormatSlot $w={36}><LinesIcon /></FormatSlot>
              <FormatSlot $w={20}><Chevron /></FormatSlot>
            </FormatRow>
          </Cell>
        </GroupBody>
        <GroupTitle>Format</GroupTitle>
      </Group>
      <Group $w={196}>
        <GroupBody>
          <VerticalTool $w={104} $ml={14} $muted>
            <IconSlot $h={55} $top={7}><FitIcon /></IconSlot>
            <VerticalLabel $mb={2}>Fit mode</VerticalLabel>
            <Chevron color="#b8b8b8" />
          </VerticalTool>
          <VerticalTool $w={60}>
            <IconSlot $h={55} $top={7}><TrellisIcon /></IconSlot>
            <VerticalLabel $mb={13}>Trellis</VerticalLabel>
            <Chevron />
          </VerticalTool>
        </GroupBody>
        <GroupTitle>Layout</GroupTitle>
      </Group>
      <Group $w={134}>
        <GroupBody>
          <VerticalTool $w={132}>
            <IconSlot $h={50} $top={1}><DataIcon /></IconSlot>
            <VerticalLabel $mb={16}>Data</VerticalLabel>
            <Chevron />
          </VerticalTool>
        </GroupBody>
        <GroupTitle>Data</GroupTitle>
      </Group>
      <Group $w={200} $end>
        <GroupBody>
          <VerticalTool $w={78} $ml={10} $muted>
            <IconSlot $h={55} $top={9}><SeriesIcon /></IconSlot>
            <VerticalLabel $mb={0}>Series</VerticalLabel>
          </VerticalTool>
          <VerticalTool $w={36} $ml={8}>
            <IconSlot $h={55} $top={7}><SplitIcon /></IconSlot>
            <VerticalLabel $mb={0}>Sp</VerticalLabel>
          </VerticalTool>
        </GroupBody>
        <GroupTitle $left={26}>Measure</GroupTitle>
      </Group>
    </Groups>
  </Ribbon>
);

const LayersPanel = () => (
  <Panel>
    <WindowIcons>
      <Pin size={17} strokeWidth={1.3} style={{ transform: "rotate(40deg)" }} />
      <ListFilter size={17} strokeWidth={1.3} />
      <ExpandIcon />
      <Ellipsis size={17} strokeWidth={1.5} />
    </WindowIcons>
    <PanelHeader>
      <PanelTitle>Layers</PanelTitle>
      <HeaderIcons>
        <OpenIcon />
        <CloseMark width="24" height="24" viewBox="0 0 24 24" fill="none" stroke="#555" strokeWidth="1.6">
          <path d="M1 1 L23 23M23 1 L1 23" />
        </CloseMark>
      </HeaderIcons>
    </PanelHeader>
    <PanelToolbar>
      <PanelButton $w={212} $mr={9}>
        <AddIcon w={29} h={28} />
        <ButtonText $w={136}>Add Element</ButtonText>
        <Chevron color="#222" />
      </PanelButton>
      <PanelButton $w={135} $mr={22}>
        <TypeIcon w={29} h={28} />
        <ButtonText $w={59}>Type</ButtonText>
        <Chevron color="#222" />
      </PanelButton>
      <ToolSlot $w={86} $gap={15}><OverlapIcon /><Chevron color="#222" /></ToolSlot>
      <ToolSlot $w={74} $gap={8}><AlignIcon /><Chevron color="#aaa" /></ToolSlot>
      <ToolSlot $w={71} $gap={7}><DistributeIcon /><Chevron color="#aaa" /></ToolSlot>
      <ToolSlot $w={56} $gap={6}><FrontIcon /><Chevron color="#222" /></ToolSlot>
    </PanelToolbar>
    <Properties>
      <PropRow>
        <PropLabel>Position</PropLabel>
        <Field $muted><span>X</span><span>4</span></Field>
        <Field $muted><span>Y</span><span>20</span></Field>
      </PropRow>
      <PropRow>
        <PropLabel>Size</PropLabel>
        <Field><span>H</span><span>75</span></Field>
        <Field><span>W</span><span>75.00</span></Field>
      </PropRow>
      <PropRow>
        <PropLabel>Resizing</PropLabel>
        <SelectField>
          <FixedText $w={0} $ml={23} />
          <VerticalArrow />
          <FixedText $w={92} $ml={21}>Fixed</FixedText>
          <Chevron color="#222" />
        </SelectField>
        <SelectField>
          <FixedText $w={0} $ml={18} />
          <HorizontalArrow />
          <FixedText $w={93} $ml={11}>Fixed</FixedText>
          <Chevron color="#222" />
        </SelectField>
      </PropRow>
    </Properties>
    <LayerList>
      {layers.map((layer) => (
        <LayerRow key={layer.name} $selected={layer.selected}>
          <Caret>
            {layer.open && <Chevron w={21} h={12} color="#444" sw={1.4} />}
          </Caret>
          <LayerIconBox $indent={layer.indent}>{layer.icon}</LayerIconBox>
          <LayerName>{layer.name}</LayerName>
          <LayerActions>
            {layer.edit && <PencilIcon />}
            <TrashIcon />
            <EyeIcon />
          </LayerActions>
        </LayerRow>
      ))}
    </LayerList>
  </Panel>
);

const App = () => (
  <Page>
    <GlobalStyle />
    <Main>
      <RibbonBar />
      <CardsRow>
        <Card>
          <YellowPanel $w={825}>
            <LogoBox $w={140} $h={134} $ml={12} $mt={14} $bg="#f5f5f5"><BullLogo /></LogoBox>
            <Kpi $ml={398} $mt={88}>
              <KpiYear>2022</KpiYear>
              <KpiValue>1.1b</KpiValue>
              <KpiDelta>
                <DeltaName>Δ1</DeltaName>
                <DeltaValue $color="#7fba00">0.8%</DeltaValue>
                <ArrowMark color="#7fba00" />
              </KpiDelta>
            </Kpi>
            <Selection />
          </YellowPanel>
          <ChartArea>
            <Bar $w={759} $color="#84bb00" $text="#222">1.1b<BarMarker $right={4} /></Bar>
            <AxisLabel>1.1b</AxisLabel>
          </ChartArea>
        </Card>
        <Card>
          <YellowPanel $w={824}>
            <LogoBox $w={138} $h={137} $ml={12} $mt={70} $bg="#ffffff"><ArrowLogo /></LogoBox>
            <Kpi $ml={121} $mt={196}>
              <KpiYear>2023</KpiYear>
              <KpiValue>1.1b</KpiValue>
              <KpiDelta>
                <DeltaName>Δ1</DeltaName>
                <DeltaValue $color="#ff0000">-0.5%</DeltaValue>
                <ArrowMark color="#ff0000" down />
              </KpiDelta>
            </Kpi>
          </YellowPanel>
          <ChartArea>
            <Bar $w={754} $color="#ff000d" $text="#fff">1.1b<BarMarker $right={-6} /></Bar>
            <AxisLabel>1.1b</AxisLabel>
          </ChartArea>
        </Card>
        <Card>
          <YellowPanel $w={824}>
            <LogoBox $w={140} $h={83} $ml={12} $mt={97} $bg="#f5f5f5"><HexLogo /></LogoBox>
          </YellowPanel>
          <ChartArea>
            <Bar $w={760} $color="#ff000d" $text="#fff">1.2b</Bar>
          </ChartArea>
        </Card>
      </CardsRow>
    </Main>
    <LayersPanel />
  </Page>
);

export default App;
